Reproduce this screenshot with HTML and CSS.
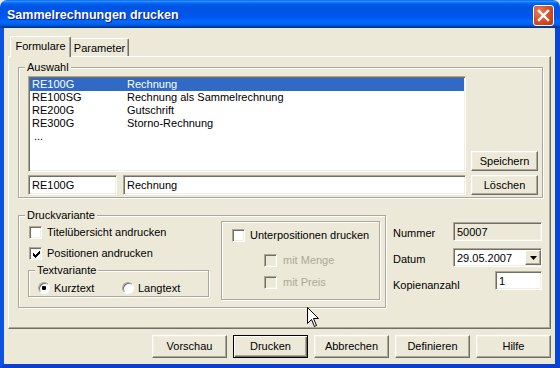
FILE: index.html
```html
<!DOCTYPE html>
<html lang="de">
<head>
<meta charset="utf-8">
<title>Sammelrechnungen drucken</title>
<link rel="stylesheet" href="styles.css">
</head>
<body>
<div class="window">
  <div class="titlebar">
    <span class="title">Sammelrechnungen drucken</span>
    <span class="close">
      <svg width="19" height="19" viewBox="0 0 19 19"><path d="M5 5 L14 14 M14 5 L5 14" stroke="#fff" stroke-width="2.4" stroke-linecap="square" fill="none"/></svg>
    </span>
  </div>
  <div class="frame">
    <div class="client">
      <div class="tabs">
        <div class="tab active tab-formulare">Formulare</div>
        <div class="tab tab-parameter">Parameter</div>
      </div>
      <div class="panel">
        <div class="group auswahl">
          <span class="legend">Auswahl</span>
          <div class="auswahl-body">
            <div class="auswahl-left">
              <div class="listbox">
                <div class="row sel"><span class="c1">RE100G</span><span>Rechnung</span></div>
                <div class="row"><span class="c1">RE100SG</span><span>Rechnung als Sammelrechnung</span></div>
                <div class="row"><span class="c1">RE200G</span><span>Gutschrift</span></div>
                <div class="row"><span class="c1">RE300G</span><span>Storno-Rechnung</span></div>
                <div class="row dots"><span class="c1">...</span></div>
              </div>
              <div class="fields">
                <div class="edit code">RE100G</div>
                <div class="edit name">Rechnung</div>
              </div>
            </div>
            <div class="auswahl-buttons">
              <div class="btn small">Speichern</div>
              <div class="btn small">Löschen</div>
            </div>
          </div>
        </div>
        <div class="lower">
          <div class="group druck">
            <span class="legend">Druckvariante</span>
            <div class="druck-body">
              <div class="druck-left">
                <div class="check first"><span class="box"></span><span>Titelübersicht andrucken</span></div>
                <div class="check second"><span class="box"><svg width="9" height="9" viewBox="0 0 9 9"><path d="M1 3h1v1h1v1h1v-1h1v-1h1v-1h1v-1h1v3h-1v1h-1v1h-1v1h-1v1h-1v-1h-1v-1h-1z" fill="#000"/></svg></span><span>Positionen andrucken</span></div>
                <div class="group textvar">
                  <span class="legend">Textvariante</span>
                  <div class="radios">
                    <div class="radio kurz"><span class="dot on"></span><span>Kurztext</span></div>
                    <div class="radio"><span class="dot"></span><span>Langtext</span></div>
                  </div>
                </div>
              </div>
              <div class="unterpos">
                <div class="check main"><span class="box"></span><span>Unterpositionen drucken</span></div>
                <div class="check sub sub1 disabled"><span class="box"></span><span>mit Menge</span></div>
                <div class="check sub sub2 disabled"><span class="box"></span><span>mit Preis</span></div>
              </div>
            </div>
          </div>
          <div class="meta">
            <span class="lbl">Nummer</span>
            <div class="edit readonly wide">50007</div>
            <span class="lbl">Datum</span>
            <div class="edit combo wide"><span>29.05.2007</span><span class="drop"><svg width="7" height="4" viewBox="0 0 7 4"><path d="M0 0h7l-3.5 4z" fill="#000"/></svg></span></div>
            <span class="lbl">Kopienanzahl</span>
            <div class="edit narrow">1</div>
          </div>
        </div>
      </div>
      <div class="buttons">
        <div class="btn">Vorschau</div>
        <div class="btn default">Drucken</div>
        <div class="btn">Abbrechen</div>
        <div class="btn">Definieren</div>
        <div class="btn">Hilfe</div>
      </div>
    </div>
  </div>
  <svg class="cursor" width="13" height="21" viewBox="0 0 13 21"><path d="M0.5 0.5 V16.5 L4.5 12.5 L7.5 19.5 L9.5 18.5 L6.5 11.5 H11.5 Z" fill="#fff" stroke="#000" stroke-width="1"/></svg>
</div>
</body>
</html>
```

FILE: styles.css
```css
* { box-sizing: border-box; }
html, body { margin: 0; padding: 0; }
body {
  width: 560px;
  height: 368px;
  overflow: hidden;
  background: #ece9d8;
  font-family: "Liberation Sans", Arial, sans-serif;
  font-size: 11px;
  line-height: 13px;
  color: #000;
}

.window {
  position: relative;
  width: 560px;
  height: 368px;
  display: flex;
  flex-direction: column;
}

/* Title bar */
.titlebar {
  height: 28px;
  flex: none;
  display: flex;
  align-items: center;
  justify-content: space-between;
  padding: 0 6px 0 7px;
  border-radius: 7px 7px 0 0;
  background: linear-gradient(to bottom, #0058ee 0%, #3a93ff 4%, #288eff 6%, #127dff 8%, #036ffc 10%, #0262ee 14%, #0057e5 20%, #0054e3 24%, #0055eb 56%, #005bf5 66%, #026afe 76%, #0062ef 86%, #0052d6 92%, #0040ab 94%, #003092 100%);
}
.title {
  color: #fff;
  font-weight: bold;
  font-size: 12.5px;
  padding-top: 3px;
  text-shadow: 1px 1px 0 #0a1883;
}
.close {
  width: 21px;
  height: 21px;
  margin-top: 2px;
  border: 1px solid #fff;
  border-radius: 3px;
  background: radial-gradient(circle at 30% 30%, #e9805f 0%, #d9512a 45%, #c0360f 100%);
  display: flex;
  align-items: center;
  justify-content: center;
}

/* Frame */
.frame {
  flex: 1;
  display: flex;
  border-left: 4px solid #0c53e2;
  border-right: 5px solid #0845d6;
  border-bottom: 4px solid #0a3fd0;
}
.client {
  flex: 1;
  display: flex;
  flex-direction: column;
  background: #ece9d8;
  padding: 8px 4px 0 4px;
}

/* Tabs */
.tabs {
  display: flex;
  align-items: flex-end;
  padding-left: 2px;
}
.tab {
  text-align: center;
  background: #ece9d8;
  border-top: 1px solid #fff;
  border-left: 1px solid #fff;
  border-right: 1px solid #716f64;
  box-shadow: inset -1px 0 0 #aca899;
  border-radius: 2px 2px 0 0;
}
.tab-formulare {
  width: 61px;
  height: 21px;
  padding-top: 3px;
  margin-bottom: -1px;
  position: relative;
  z-index: 1;
}
.tab-parameter {
  width: 58px;
  height: 18px;
  padding-top: 3px;
  border-left: none;
}

/* Panel */
.panel {
  height: 273px;
  flex: none;
  border-top: 1px solid #fff;
  border-left: 1px solid #fff;
  border-right: 1px solid #716f64;
  border-bottom: 1px solid #716f64;
  box-shadow: inset -1px -1px 0 #aca899;
  padding: 10px 7px 0 9px;
}

/* Group boxes */
.group {
  border: 1px solid #aca899;
  box-shadow: inset 1px 1px 0 #fff, 1px 1px 0 #fff;
}
.legend {
  display: block;
  width: fit-content;
  margin: -7px 0 0 6px;
  padding: 0 2px;
  line-height: 13px;
  background: #ece9d8;
}

.auswahl {
  height: 131px;
}
.auswahl-body {
  display: flex;
  padding: 2px 3px 0 9px;
  gap: 5px;
}
.auswahl-left {
  width: 438px;
  display: flex;
  flex-direction: column;
  gap: 3px;
}
.auswahl-buttons {
  width: 67px;
  display: flex;
  flex-direction: column;
  justify-content: flex-end;
  gap: 4px;
}

/* Sunken controls */
.listbox, .edit {
  background: #fff;
  border-style: solid;
  border-width: 1px;
  border-color: #aca899 #fff #fff #aca899;
  box-shadow: inset 1px 1px 0 #716f64, inset -1px -1px 0 #f1efe2;
}
.listbox {
  height: 96px;
  padding: 1px 1px 0 1px;
}
.row {
  display: flex;
  height: 13px;
  line-height: 13px;
  padding-left: 2px;
}
.row .c1 { width: 95px; }
.row.sel { background: #316ac5; color: #fff; }
.row.dots .c1 { padding-left: 2px; }

.fields {
  display: flex;
  gap: 6px;
}
.edit {
  height: 20px;
  line-height: 15px;
  padding: 2px 3px 0 3px;
}
.edit.code { width: 89px; }
.edit.name { flex: 1; padding-left: 3px; }

/* Buttons */
.btn {
  height: 23px;
  width: 75px;
  display: flex;
  align-items: center;
  justify-content: center;
  background: #ece9d8;
  border-style: solid;
  border-width: 1px;
  border-color: #fff #716f64 #716f64 #fff;
  box-shadow: inset -1px -1px 0 #aca899, inset 1px 1px 0 #f1efe2;
}
.btn.small {
  height: 20px;
  width: 67px;
}
.btn.default {
  border-color: #000;
  box-shadow: inset 1px 1px 0 #fff, inset -1px -1px 0 #716f64, inset -2px -2px 0 #aca899;
}

/* Lower area */
.lower {
  display: flex;
  margin-top: 17px;
}
.druck {
  width: 368px;
  height: 93px;
}
.druck-body {
  display: flex;
  padding-left: 9px;
}
.druck-left {
  width: 182px;
  padding-top: 4px;
  display: flex;
  flex-direction: column;
}
.check {
  display: flex;
  align-items: center;
  height: 13px;
  gap: 5px;
}
.druck-left .check { margin-left: 1px; }
.check.second { margin-top: 8px; }
.box {
  width: 13px;
  height: 13px;
  flex: none;
  background: #fff;
  border-style: solid;
  border-width: 1px;
  border-color: #aca899 #fff #fff #aca899;
  box-shadow: inset 1px 1px 0 #716f64, inset -1px -1px 0 #f1efe2;
  display: flex;
  align-items: center;
  justify-content: center;
  padding: 1px 0 0 1px;
}
.box svg { display: block; }
.check.disabled { color: #aca899; gap: 6px; }
.check.disabled .box { background: #ece9d8; }

.textvar {
  width: 181px;
  height: 27px;
  margin-top: 10px;
}
.radios {
  display: flex;
  padding: 5px 0 0 9px;
}
.radio {
  display: flex;
  align-items: center;
  gap: 4px;
  height: 12px;
}
.radio.kurz { width: 84px; }
.dot {
  width: 12px;
  height: 12px;
  flex: none;
  border-radius: 50%;
  background: #fff;
  border: 1px solid;
  border-color: #aca899 #fff #fff #aca899;
  box-shadow: inset 1px 1px 0 #716f64;
  display: flex;
  align-items: center;
  justify-content: center;
}
.dot.on::after {
  content: "";
  width: 4px;
  height: 4px;
  border-radius: 1px;
  background: #000;
}

.unterpos {
  width: 159px;
  height: 79px;
  margin: -1px 0 0 11px;
  border: 1px solid #aca899;
  box-shadow: inset 1px 1px 0 #fff, 1px 1px 0 #fff;
  padding: 7px 0 0 10px;
}
.check.sub { margin-left: 32px; }
.check.sub1 { margin-top: 12px; }
.check.sub2 { margin-top: 9px; }

/* Right meta fields */
.meta {
  display: grid;
  grid-template-columns: 60px 89px;
  grid-template-rows: 19px 19px 19px;
  row-gap: 7px;
  margin-left: 7px;
  padding-top: 7px;
  align-content: start;
}
.meta .lbl {
  align-self: end;
  line-height: 13px;
  margin-bottom: 1px;
}
.meta .edit { height: 19px; }
.meta .edit.readonly { background: #ece9d8; }
.meta .edit.narrow {
  width: 47px;
  justify-self: end;
}
.meta > :nth-child(5), .meta > :nth-child(6) { margin-top: -3px; }
.edit.combo {
  display: flex;
  justify-content: space-between;
  padding-right: 0;
}
.drop {
  width: 16px;
  height: 15px;
  margin-top: -1px;
  background: #ece9d8;
  border-style: solid;
  border-width: 1px;
  border-color: #fff #716f64 #716f64 #fff;
  box-shadow: inset -1px -1px 0 #aca899;
  display: flex;
  align-items: center;
  justify-content: center;
}
.drop svg { display: block; }

/* Bottom buttons */
.buttons {
  display: flex;
  justify-content: flex-end;
  gap: 6px;
  margin-top: 6px;
}

/* Mouse cursor overlay */
.cursor {
  position: absolute;
  left: 307px;
  top: 307px;
}
```
